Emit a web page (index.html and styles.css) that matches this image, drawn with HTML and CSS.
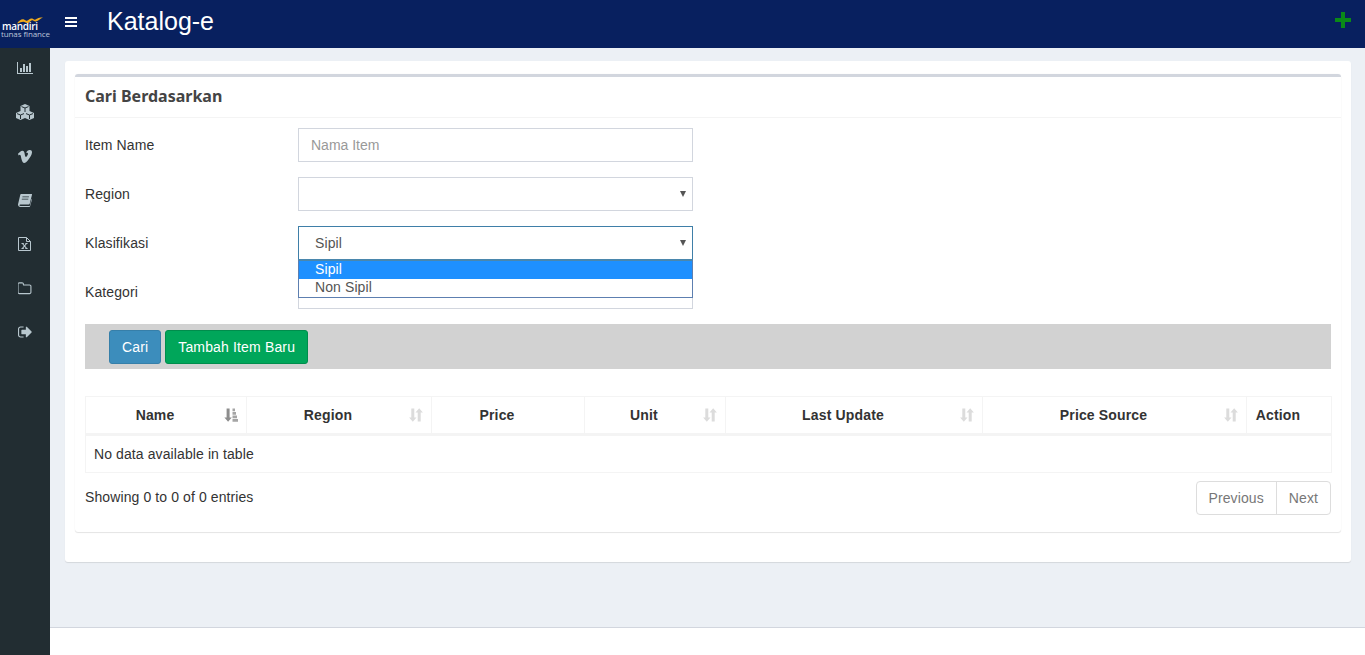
FILE: index.html
```html
<!DOCTYPE html>
<html lang="id">
<head>
<meta charset="UTF-8">
<meta name="viewport" content="width=device-width, initial-scale=1.0">
<title>Katalog-e</title>
<link rel="stylesheet" href="styles.css">
</head>
<body>

<header class="topbar">
    <div class="logo">
        <svg class="logo-wave" viewBox="0 0 26 7"><path d="M0 6.500C2 3.500 5 1.500 7 2.500c1.500.7 2 1.500 3 1.200C11.500 3 13 1 15 1.500c1.500.4 2 1.500 3 1.200C19.500 2.300 21 .3 26 .5c-3 1-4.500 3.500-7 4-1.500.3-2.500-1-3.500-1.200-1.500-.2-2.500 2.200-5 2.700-1.500.2-2.500-1.200-4-1.300C5 4.500 3 5.500 0 6.500z" fill="#f2ab1c"/></svg>
        <div class="logo-main">mandiri</div>
        <div class="logo-sub">tunas finance</div>
    </div>
    <svg class="burger" viewBox="0 0 12 10"><path d="M0 0h12v2H0zM0 4h12v2H0zM0 8h12v2H0z" fill="#fff"/></svg>
    <h1 class="app-title">Katalog-e</h1>
    <svg class="add-icon" viewBox="0 0 16 16"><path d="M6 0h4v6h6v4h-6v6H6v-6H0V6h6z" fill="#0a8a17"/></svg>
</header>

<div class="layout">
    <nav class="sidebar">
        <a class="nav-item"><svg width="16" height="14" viewBox="0 0 2048 1792"><path d="M640 896v512h-256v-512h256zm384-512v1024h-256v-1024h256zm1024 1152v128h-2048v-1536h128v1408h1920zm-640-896v768h-256v-768h256zm384-384v1152h-256v-1152h256z"/></svg></a>
        <a class="nav-item"><svg width="18" height="16" viewBox="0 0 18 16"><path d="M9 0l4.500 2v5L9 9 4.500 7V2zM4.500 7L9 9v5l-4.500 2L0 14V9zM13.500 7L18 9v5l-4.500 2L9 14V9z"/><path d="M5.500 2.600L9 4l3.500-1.400M9 4v4M1 9.600l3.500 1.400L8 9.600M4.500 11v4M10 9.600l3.500 1.400L17 9.600M13.500 11v4" fill="none" stroke="#222d32" stroke-width="1"/></svg></a>
        <a class="nav-item"><svg width="14" height="13" viewBox="0 0 14 13"><path d="M0 3.700C1.500 2.400 3 .8 4.300.7c1.500-.1 2 1 2.200 2.300.3 1.700.7 4 1.400 4 .6 0 2.100-2.300 2.100-3.300 0-1-.8-1.200-1.900-.7C8.700 1.300 10.100.2 11.700.1c1.700-.1 2.400 1 2.300 2.500-.2 2.100-1.600 4.600-3.700 7.200-1.700 2.100-3 3.200-4.100 3.200-1.300 0-2-1.500-2.500-3.300-.5-1.800-.9-5-1.800-5-.4 0-1 .4-1.300.7z"/></svg></a>
        <a class="nav-item"><svg width="14" height="13" viewBox="0 0 14 13"><path d="M3 0h10.500c.5 0 .6.400.5.800l-2.300 9c-.1.500-.4.800-1 .8H2.300c-.8 0-1 .5-.8.900.1.300.5.400 1 .400h9.200l2-7.500.3 1-2 7.100c-.1.300-.3.500-.7.500H2.300C1 13 0 12 0 10.800c0-.3 0-.5.100-.8L2.300.7C2.400.3 2.600 0 3 0zm1.500 2.500l-.2.800h6.500l.2-.8zm-.6 2.200l-.2.800h6.500l.2-.8z"/></svg></a>
        <a class="nav-item"><svg width="13" height="14" viewBox="0 0 13 14"><path d="M.5.500h8l4 4v9H.5z M8.500.500v4h4" fill="none" stroke="#b8c7ce"/><path d="M3.500 6.500h2.300M7.300 6.500h2.300M4.500 6.500l4 4.800M8.500 6.500l-4 4.800M3.500 11.500h2.300M7.300 11.500h2.300" fill="none" stroke="#b8c7ce" stroke-width="1.100"/></svg></a>
        <a class="nav-item"><svg width="14" height="13" viewBox="128 192 1664 1344"><path d="M1600 1312v-704q0-40-28-68t-68-28h-704q-40 0-68-28t-28-68v-64q0-40-28-68t-68-28h-320q-40 0-68 28t-28 68v960q0 40 28 68t68 28h1216q40 0 68-28t28-68zm128-704v704q0 92-66 158t-158 66h-1216q-92 0-158-66t-66-158v-960q0-92 66-158t158-66h320q92 0 158 66t66 158v32h672q92 0 158 66t66 158z"/></svg></a>
        <a class="nav-item"><svg width="14" height="12" viewBox="64 256 1600 1280"><path d="M704 1440q0 4 1 20t.5 26.500-3 23.500-10 19.500-20.500 6.500h-320q-119 0-203.500-84.500t-84.500-203.500v-704q0-119 84.500-203.500t203.500-84.500h320q13 0 22.500 9.500t9.500 22.500q0 4 1 20t.5 26.500-3 23.500-10 19.500-20.500 6.500h-320q-66 0-113 47t-47 113v704q0 66 47 113t113 47h312l11.500 1 11.500 3 8 5.500 7 9 2 13.500zm928-544q0 26-19 45l-544 544q-19 19-45 19t-45-19-19-45v-288h-448q-26 0-45-19t-19-45v-384q0-26 19-45t45-19h448v-288q0-26 19-45t45-19 45 19l544 544q19 19 19 45z"/></svg></a>
    </nav>

    <div class="content-wrap">
        <main class="content">
            <section class="card">
                <div class="box">
                    <h3 class="box-title">Cari Berdasarkan</h3>
                    <div class="box-body">
                        <form class="search-form">
                            <div class="form-row">
                                <label>Item Name</label>
                                <input class="field" type="text" placeholder="Nama Item">
                            </div>
                            <div class="form-row">
                                <label>Region</label>
                                <div class="field select"><span class="arrow"></span></div>
                            </div>
                            <div class="form-row">
                                <label>Klasifikasi</label>
                                <div class="select-wrap">
                                    <div class="field select select-open">Sipil<span class="arrow"></span></div>
                                    <ul class="dropdown">
                                        <li class="selected">Sipil</li>
                                        <li>Non Sipil</li>
                                    </ul>
                                </div>
                            </div>
                            <div class="form-row">
                                <label>Kategori</label>
                                <div class="field select"></div>
                            </div>
                            <div class="action-bar">
                                <button type="button" class="btn btn-blue">Cari</button>
                                <button type="button" class="btn btn-green">Tambah Item Baru</button>
                            </div>
                        </form>

                        <table class="tabela">
                            <thead>
                                <tr>
                                    <th class="col-name">Name
                                        <svg class="sort-icon" viewBox="0 0 14 14"><path d="M2.600 .5h3v9h2.200l-3.700 4.200L.4 9.500h2.200z" fill="#8d8d8d"/><path d="M8.500 .5h2.500v2.700H8.500zM8.500 4h3.500v2.700H8.500zM8.500 7.500h4.500v2.700H8.500zM8.500 11h5.500v2.700H8.500z" fill="#a5a5a5"/></svg>
                                    </th>
                                    <th class="col-region">Region
                                        <svg class="sort-icon" viewBox="0 0 14 14"><path d="M2.300 .5h3v9h2.200l-3.700 4.200L.1 9.500h2.200zM8.700 13.500v-9H6.500L10.200.3l3.700 4.200h-2.200v9z" fill="#dcdcdc"/></svg>
                                    </th>
                                    <th class="col-price">Price</th>
                                    <th class="col-unit">Unit
                                        <svg class="sort-icon" viewBox="0 0 14 14"><path d="M2.300 .5h3v9h2.200l-3.700 4.200L.1 9.500h2.200zM8.700 13.500v-9H6.500L10.200.3l3.700 4.200h-2.200v9z" fill="#dcdcdc"/></svg>
                                    </th>
                                    <th class="col-update">Last Update
                                        <svg class="sort-icon" viewBox="0 0 14 14"><path d="M2.300 .5h3v9h2.200l-3.700 4.200L.1 9.500h2.200zM8.700 13.500v-9H6.500L10.200.3l3.700 4.200h-2.200v9z" fill="#dcdcdc"/></svg>
                                    </th>
                                    <th class="col-source">Price Source
                                        <svg class="sort-icon" viewBox="0 0 14 14"><path d="M2.300 .5h3v9h2.200l-3.700 4.200L.1 9.500h2.200zM8.700 13.500v-9H6.500L10.200.3l3.700 4.200h-2.200v9z" fill="#dcdcdc"/></svg>
                                    </th>
                                    <th class="col-action">Action</th>
                                </tr>
                            </thead>
                            <tbody>
                                <tr><td colspan="7">No data available in table</td></tr>
                            </tbody>
                        </table>

                        <div class="table-footer">
                            <span class="info">Showing 0 to 0 of 0 entries</span>
                            <div class="pager">
                                <a class="page-link">Previous</a>
                                <a class="page-link">Next</a>
                            </div>
                        </div>
                    </div>
                </div>
            </section>
        </main>
        <footer class="footer"></footer>
    </div>
</div>

</body>
</html>
```

FILE: styles.css
```css
* {
    box-sizing: border-box;
}
html, body {
    height: 100%;
}
body {
    margin: 0;
    font-family: "Liberation Sans", Arial, sans-serif;
    font-size: 14px;
    line-height: 20px;
    letter-spacing: 0.1px;
    color: #333;
    display: flex;
    flex-direction: column;
    overflow: hidden;
}
.topbar {
    height: 48px;
    flex: none;
    background-color: #08205f;
    display: flex;
    align-items: center;
    color: #fff;
}
.logo {
    width: 50px;
    height: 48px;
    flex: none;
    padding: 22px 0 0 2px;
    position: relative;
}
.logo-wave {
    position: absolute;
    left: 17px;
    top: 17px;
    width: 26px;
    height: 7px;
}
.logo-main {
    font-family: "Open Sans", sans-serif;
    font-size: 10px;
    font-weight: 600;
    line-height: 9px;
    letter-spacing: -0.3px;
}
.logo-sub {
    font-family: "Open Sans", sans-serif;
    font-size: 8px;
    line-height: 8px;
    letter-spacing: -0.1px;
    margin: -1px 0 0 -1px;
    color: #bcc6da;
    white-space: nowrap;
}
.burger {
    width: 12px;
    height: 10px;
    margin: 0 0 5px 15px;
}
.app-title {
    margin: 0 0 7px 30px;
    font-size: 25px;
    font-weight: normal;
    line-height: 36px;
    letter-spacing: 0;
}
.add-icon {
    width: 16px;
    height: 16px;
    margin: 0 14px 8px auto;
}
.layout {
    flex: 1;
    display: flex;
    min-height: 0;
}
.sidebar {
    width: 50px;
    flex: none;
    background-color: #222d32;
    display: flex;
    flex-direction: column;
    gap: 4px;
}
.nav-item {
    height: 40px;
    display: flex;
    align-items: center;
    justify-content: center;
    padding-right: 1px;
}
.nav-item svg {
    fill: #b8c7ce;
}
.content-wrap {
    flex: 1;
    display: flex;
    flex-direction: column;
    background-color: #ecf0f5;
    min-width: 0;
}
.content {
    flex: 1;
    padding: 13px 14px 0 15px;
}
.footer {
    height: 28px;
    flex: none;
    background-color: #fff;
    border-top: 1px solid #d2d6de;
}
.card {
    background-color: #fff;
    border-radius: 3px;
    height: 501px;
    padding: 13px 0 0 10px;
    box-shadow: 0 1px 1px rgba(0, 0, 0, 0.1);
}
.box {
    width: 1266px;
    height: 458px;
    border-top: 3px solid #d2d6de;
    border-radius: 3px;
    box-shadow: 0 1px 1px rgba(0, 0, 0, 0.1), 0 0 1px rgba(0, 0, 0, 0.08);
}
.box-title {
    margin: 0;
    height: 41px;
    padding: 9px 10px 0;
    font-family: "Noto Sans", sans-serif;
    font-size: 16px;
    font-weight: 700;
    line-height: 20px;
    letter-spacing: 0;
    color: #444;
    border-bottom: 1px solid #f4f4f4;
}
.box-body {
    padding: 10px 0 0 10px;
}
.form-row {
    display: flex;
    align-items: center;
    height: 34px;
    margin-bottom: 15px;
}
.form-row label {
    width: 213px;
    flex: none;
}
.field {
    width: 395px;
    height: 34px;
    border: 1px solid #d2d6de;
    background-color: #fff;
    padding: 6px 12px;
    font-family: inherit;
    font-size: 14px;
    line-height: 20px;
    color: #555;
    outline: none;
    display: block;
}
.field::placeholder {
    color: #999;
}
.select {
    position: relative;
    padding-left: 16px;
}
.arrow {
    position: absolute;
    right: 6px;
    top: 13px;
    border-left: 3px solid transparent;
    border-right: 3px solid transparent;
    border-top: 6px solid #555;
}
.select-wrap {
    position: relative;
}
.select-open {
    border-color: #3f7fa8;
}
.dropdown {
    position: absolute;
    left: 0;
    top: 33px;
    width: 395px;
    margin: 0;
    padding: 0;
    list-style: none;
    background-color: #fff;
    border: 1px solid #5d7fb0;
    border-top: 2px solid #4a87ad;
    z-index: 2;
}
.dropdown li {
    height: 18px;
    line-height: 16px;
    padding-left: 16px;
    color: #555;
}
.dropdown .selected {
    background-color: #1e90ff;
    color: #fff;
}
.action-bar {
    width: 1246px;
    height: 45px;
    background-color: #d2d2d2;
    padding: 6px 0 0 24px;
    display: flex;
    gap: 4px;
}
.btn {
    height: 34px;
    padding: 6px 12px;
    font-family: inherit;
    font-size: 14px;
    line-height: 20px;
    letter-spacing: 0.15px;
    color: #fff;
    border: 1px solid;
    border-radius: 3px;
    cursor: pointer;
}
.btn-blue {
    background-color: #3c8dbc;
    border-color: #367fa9;
}
.btn-green {
    background-color: #00a65a;
    border-color: #008d4c;
}
.tabela {
    width: 1246px;
    margin-top: 27px;
    border-collapse: collapse;
    table-layout: fixed;
    border: 1px solid #f4f4f4;
}
.tabela th {
    position: relative;
    height: 38px;
    padding: 0 30px 0 8px;
    font-weight: bold;
    letter-spacing: 0.15px;
    color: #333;
    text-align: center;
    border-left: 1px solid #f4f4f4;
    border-bottom: 3px solid #f4f4f4;
}
.tabela td {
    height: 38px;
    padding: 0 8px;
}
.col-name { width: 161px; }
.col-region { width: 185px; }
.col-price { width: 153px; }
.col-unit { width: 141px; }
.col-update { width: 257px; }
.col-source { width: 264px; }
.col-action { width: 85px; }
.sort-icon {
    position: absolute;
    right: 8px;
    top: 11px;
    width: 14px;
    height: 14px;
}
.table-footer {
    width: 1246px;
    display: flex;
    justify-content: space-between;
    margin-top: 8px;
}
.info {
    padding-top: 6px;
}
.pager {
    display: flex;
    height: 34px;
    border: 1px solid #ddd;
    border-radius: 4px;
}
.page-link {
    padding: 6px 12px;
    color: #777;
}
.page-link + .page-link {
    border-left: 1px solid #ddd;
}
```
